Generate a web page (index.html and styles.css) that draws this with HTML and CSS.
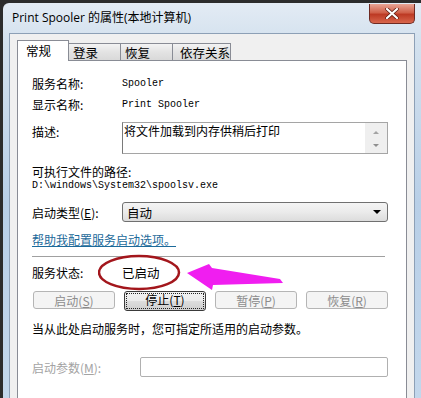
FILE: index.html
```html
<!DOCTYPE html>
<html lang="zh-CN">
<head>
  <meta charset="UTF-8">
  <title>Print Spooler 的属性(本地计算机)</title>
  <link rel="stylesheet" href="styles.css">
</head>
<body>
  <div class="window">
    <div class="titlebar">
      <span class="title">Print Spooler 的属性(本地计算机)</span>
      <div class="close">
        <svg width="14" height="11" viewBox="0 0 14 11">
          <path d="M2 1 L12 10 M12 1 L2 10" stroke="#5a1a10" stroke-width="3.6" stroke-linecap="round"/>
          <path d="M2 1 L12 10 M12 1 L2 10" stroke="#fff" stroke-width="2.2" stroke-linecap="round"/>
        </svg>
      </div>
    </div>
    <div class="client">
      <div class="tabs">
        <div class="tab active">常规</div>
        <div class="tab">登录</div>
        <div class="tab">恢复</div>
        <div class="tab wide">依存关系</div>
      </div>
      <div class="panel">
        <div class="row row-name">
          <span class="label">服务名称:</span>
          <span class="mono">Spooler</span>
        </div>
        <div class="row row-display">
          <span class="label">显示名称:</span>
          <span class="mono">Print Spooler</span>
        </div>
        <div class="row row-desc">
          <span class="label">描述:</span>
          <div class="desc-box">
            <span class="desc-text">将文件加载到内存供稍后打印</span>
            <div class="scroll">
              <span class="up"></span>
              <span class="down"></span>
            </div>
          </div>
        </div>
        <div class="path-label">可执行文件的路径:</div>
        <div class="path mono">D:\windows\System32\spoolsv.exe</div>
        <div class="row row-type">
          <span class="label">启动类型(<u>E</u>):</span>
          <div class="select">
            <span>自动</span>
            <span class="caret"></span>
          </div>
        </div>
        <div class="link">帮助我配置服务启动选项。</div>
        <div class="sep"></div>
        <div class="row row-status">
          <span class="label">服务状态:</span>
          <span class="status">已启动</span>
        </div>
        <div class="buttons">
          <div class="btn disabled">启动(<u>S</u>)</div>
          <div class="btn focus"><span>停止(<u>T</u>)</span></div>
          <div class="btn disabled">暂停(<u>P</u>)</div>
          <div class="btn disabled">恢复(<u>R</u>)</div>
        </div>
        <div class="hint">当从此处启动服务时，您可指定所适用的启动参数。</div>
        <div class="row row-param">
          <span class="label param-label">启动参数(<u>M</u>):</span>
          <div class="param-input"></div>
        </div>
        <svg class="mark" width="200" height="40" viewBox="0 0 200 40">
          <ellipse cx="41" cy="18.5" rx="40" ry="16.5" fill="none" stroke="#a3161c" stroke-width="2.5"/>
          <polygon points="89,19 111,10 114,14 182,25 185,29 115,31 114,36" fill="#f01ef0"/>
        </svg>
      </div>
    </div>
  </div>
</body>
</html>
```

FILE: styles.css
```css
body {
  margin: 0;
  background: #2c2c2c;
  font-family: "Noto Sans CJK SC", sans-serif;
  font-size: 12px;
  color: #000;
  overflow: hidden;
}
.window {
  margin: 3px 0 0 3px;
  width: 418px;
  padding: 0 6px;
  box-sizing: border-box;
  border-top-left-radius: 6px;
  background: linear-gradient(#e3ebf4, #d3e1ee 40px, #b8cfe7 200px, #c4d8ec);
}
.titlebar {
  height: 30px;
  display: flex;
  justify-content: space-between;
  align-items: flex-start;
}
.title {
  font-family: "Open Sans", "Noto Sans CJK SC", sans-serif;
  font-size: 12px;
  line-height: 14px;
  margin: 8px 0 0 3px;
}
.close {
  width: 44px;
  height: 19px;
  margin-top: 1px;
  border: 1px solid #6e2a22;
  border-top: none;
  border-radius: 0 0 5px 5px;
  background: linear-gradient(#e9a595, #d0614a 45%, #bd3a24 55%, #d8664c);
  display: flex;
  align-items: center;
  justify-content: center;
}
.client {
  border: 1px solid #8da0b6;
  background: #f0f0f0;
  padding: 6px 7px 0 7px;
}
.tabs {
  display: flex;
  align-items: flex-start;
  height: 21px;
  margin-bottom: -1px;
  position: relative;
  z-index: 1;
}
.tab {
  height: 16px;
  margin-top: 3px;
  width: 47px;
  box-sizing: content-box;
  padding-left: 4px;
  border: 1px solid #898c95;
  border-bottom: none;
  border-left: none;
  background: linear-gradient(#f3f3f3, #e3e3e3 50%, #d9d9d9);
  line-height: 17px;
  font-size: 12.5px;
}
.tab.active {
  width: 42px;
  height: 20px;
  margin-top: 0;
  padding-left: 8px;
  border-left: 1px solid #898c95;
  background: #fff;
  line-height: 20px;
}
.tab.wide {
  width: 50px;
  padding-left: 7px;
}
.panel {
  position: relative;
  border: 1px solid #898c95;
  background: #fff;
  padding: 12px 18px 40px 14px;
}
.row {
  display: flex;
  align-items: center;
}
.label {
  width: 90px;
  flex: none;
}
.mono {
  font-family: "Liberation Mono", monospace;
  font-size: 10px;
}
.row-name {
  height: 20px;
}
.row-display {
  height: 20px;
  margin-top: 1px;
}
.row-desc {
  align-items: flex-start;
  margin-top: 8px;
}
.row-desc .label {
  line-height: 17px;
  margin-top: 1px;
}
.desc-box {
  flex: 1;
  height: 30px;
  border: 1px solid #a5a5a5;
  border-left-color: #7a7a7a;
  display: flex;
  justify-content: space-between;
}
.desc-text {
  line-height: 16px;
  padding-left: 1px;
}
.scroll {
  width: 22px;
  background: #efefef;
  position: relative;
}
.scroll .up, .scroll .down {
  position: absolute;
  left: 8px;
  width: 0;
  height: 0;
  border-left: 3px solid transparent;
  border-right: 3px solid transparent;
}
.scroll .up {
  top: 8px;
  border-bottom: 3px solid #a3a3a3;
}
.scroll .down {
  top: 21px;
  border-top: 3px solid #8f8f8f;
}
.path-label {
  margin-top: 11px;
  height: 14px;
  line-height: 14px;
}
.path {
  height: 14px;
  line-height: 14px;
}
.row-type {
  margin-top: 9px;
}
.select {
  flex: 1;
  height: 18px;
  border: 1px solid #707070;
  border-radius: 3px;
  background: linear-gradient(#f4f4f4, #ebebeb 50%, #dcdcdc);
  display: flex;
  align-items: center;
  justify-content: space-between;
  padding: 0 6px 0 4px;
  font-size: 12.5px;
}
.caret {
  width: 0;
  height: 0;
  border-left: 4px solid transparent;
  border-right: 4px solid transparent;
  border-top: 4px solid #000;
}
.link {
  margin-top: 10px;
  height: 16px;
  line-height: 16px;
  color: #1c6a9a;
  text-decoration: underline;
}
.sep {
  margin: 8px 3px 0 0;
  height: 1px;
  background: #a0a0a0;
}
.row-status {
  margin-top: 5px;
  height: 20px;
}
.status {
  font-size: 12.5px;
}
.buttons {
  margin: 9px 0 0 1px;
  display: grid;
  grid-template-columns: repeat(4, 1fr);
  gap: 9px;
}
.btn {
  height: 16px;
  border: 1px solid #707070;
  border-radius: 3px;
  background: linear-gradient(#f2f2f2, #ebebeb 50%, #dddddd 51%, #cfcfcf);
  display: flex;
  align-items: center;
  justify-content: center;
  font-size: 12px;
}
.btn.disabled {
  border-color: #b5b5b5;
  background: #f4f4f4;
  color: #8c8c8c;
}
.btn.focus {
  border-color: #3a3a3a;
  padding: 1px;
}
.btn.focus span {
  flex: 1;
  align-self: stretch;
  border: 1px dotted #222;
  line-height: 12px;
  text-align: center;
}
.hint {
  margin-top: 10px;
  height: 16px;
  line-height: 16px;
}
.row-param {
  margin-top: 20px;
}
.param-label {
  width: 108px;
  color: #a3a3a3;
}
.param-input {
  flex: 1;
  height: 18px;
  border: 1px solid #b0b0b0;
  border-radius: 2px;
}
.mark {
  position: absolute;
  left: 80px;
  top: 193px;
}
```
